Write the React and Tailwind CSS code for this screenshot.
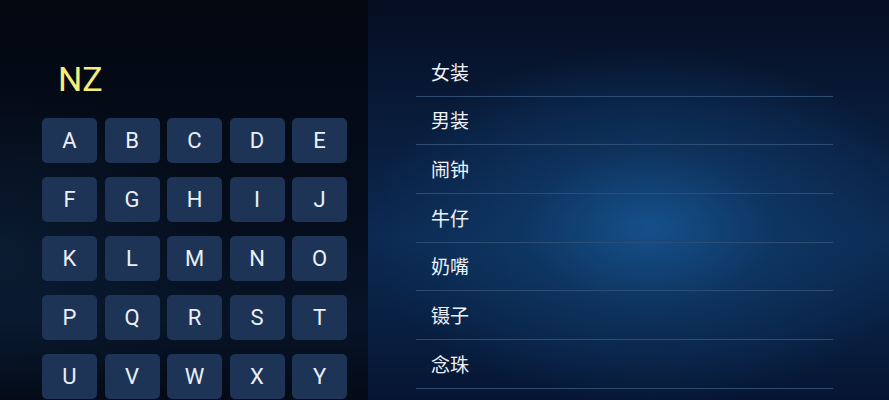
import React from "react";

const rows = [
  ["A", "B", "C", "D", "E"],
  ["F", "G", "H", "I", "J"],
  ["K", "L", "M", "N", "O"],
  ["P", "Q", "R", "S", "T"],
  ["U", "V", "W", "X", "Y"],
];

const items = ["女装", "男装", "闹钟", "牛仔", "奶嘴", "镊子", "念珠"];

export default function App() {
  return (
    <div
      className="flex w-[889px] h-[400px] overflow-hidden"
      style={{ fontFamily: 'Roboto, "Noto Sans CJK SC", sans-serif' }}
    >
      <div className="w-[368px] h-full shrink-0 bg-[radial-gradient(ellipse_220px_160px_at_0%_62%,rgba(14,36,62,0.55)_0%,rgba(14,36,62,0)_100%),linear-gradient(180deg,#030811_0%,#050d1c_55%,#071428_80%,#040a16_100%)] pl-[42px] pt-[62px]">
        <div className="ml-[16px] h-[35px] text-[34px] leading-[35px] text-[#f4ef78]">NZ</div>
        <div className="mt-[21px] flex flex-col gap-[14px]">
          {rows.map((r, i) => (
            <div key={i} className="flex gap-[7.5px]">
              {r.map((k) => (
                <div
                  key={k}
                  className="w-[55px] h-[45px] shrink-0 rounded-[5px] bg-[#1e3457] flex items-center justify-center text-[22px] text-[#eaf0f7]"
                >
                  {k}
                </div>
              ))}
            </div>
          ))}
        </div>
      </div>
      <div className="flex-1 h-full bg-[radial-gradient(ellipse_280px_180px_at_54%_57%,#15508a_0%,rgba(16,62,110,0.6)_45%,rgba(10,40,75,0)_100%),linear-gradient(180deg,#050e22_0%,#0a2246_45%,#0b2a52_60%,#061532_100%)] pl-[48px] pt-[48px]">
        <div className="w-[417px] flex flex-col">
          {items.map((t) => (
            <div
              key={t}
              className="h-[48.67px] border-b border-[#2f4d73] flex items-center pl-[15px] text-[19px] text-[#eef2f8]"
              style={{ fontFamily: '"Noto Sans CJK SC", sans-serif' }}
            >
              {t}
            </div>
          ))}
        </div>
      </div>
    </div>
  );
}
